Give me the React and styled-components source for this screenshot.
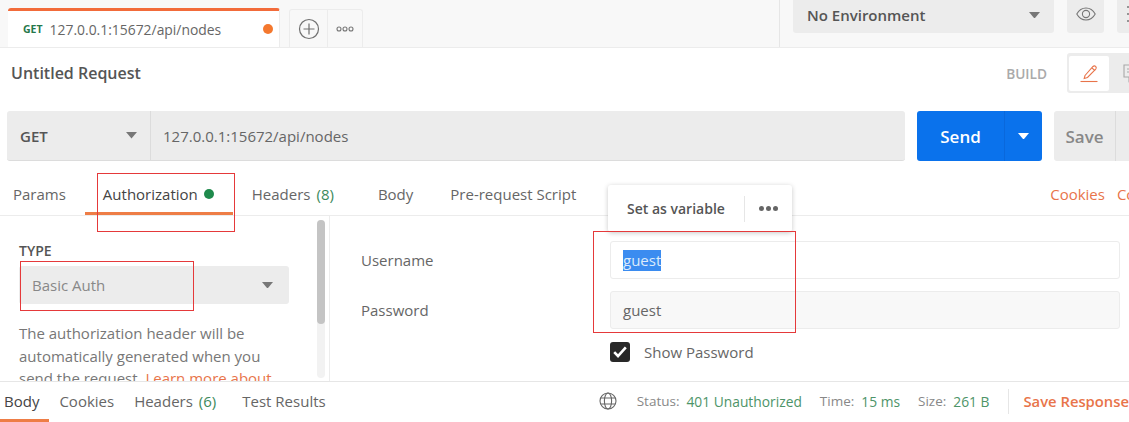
import { Fragment } from "react";
import styled, { createGlobalStyle } from "styled-components";

const GlobalStyle = createGlobalStyle`
  html, body {
    margin: 0;
    padding: 0;
    background: #fff;
  }
  * {
    box-sizing: border-box;
  }
`;

const Page = styled.div`
  position: relative;
  width: 1129px;
  height: 422px;
  overflow: hidden;
  display: flex;
  flex-direction: column;
  background: #fff;
  color: #555;
  font-family: "Open Sans", "Liberation Sans", sans-serif;
  font-size: 15px;
`;

const TopBar = styled.div`
  height: 48px;
  flex: none;
  display: flex;
  background: #f8f8f8;
  border-bottom: 1px solid #ececec;
  padding-left: 8px;
`;

const RequestTab = styled.div`
  width: 272px;
  height: 39px;
  flex: none;
  margin-top: 8px;
  padding: 0 6px 0 15px;
  display: flex;
  align-items: center;
  background: #fff;
  border-top: 3px solid #f26b3a;
  border-right: 1px solid #ececec;
  border-radius: 3px 3px 0 0;
`;

const MethodTag = styled.span`
  color: #26784a;
  font-size: 10.5px;
  font-weight: 700;
  margin-right: 7px;
`;

const TabUrl = styled.span`
  flex: 1;
  font-size: 13.9px;
  color: #666;
`;

const Dot = styled.span`
  display: inline-block;
  flex: none;
  width: ${(p) => p.$size}px;
  height: ${(p) => p.$size}px;
  border-radius: 50%;
  background: ${(p) => p.$color};
`;

const TabTools = styled.div`
  display: flex;
  flex: none;
  height: 38px;
  margin: 9px 0 0 9px;
  border: 1px solid #ececec;
  border-bottom: none;
  border-radius: 3px 3px 0 0;
`;

const ToolButton = styled.div`
  width: ${(p) => p.$width}px;
  display: flex;
  align-items: center;
  justify-content: center;
  border-left: ${(p) => (p.$divided ? "1px solid #ececec" : "none")};
`;

const EnvArea = styled.div`
  margin-left: 416px;
  padding-left: 13px;
  border-left: 1px solid #e6e6e6;
  display: flex;
  gap: 13px;
  flex: none;
`;

const EnvSelect = styled.div`
  width: 261px;
  height: 33px;
  padding: 0 14px 3px;
  display: flex;
  align-items: center;
  justify-content: space-between;
  background: #ececec;
  border-radius: 0 0 3px 3px;
  font-weight: 600;
  font-size: 15px;
  color: #555;
`;

const EnvButton = styled.div`
  width: 37px;
  height: 33px;
  flex: none;
  display: flex;
  align-items: center;
  justify-content: ${(p) => (p.$start ? "flex-start" : "center")};
  padding: 0 0 5px ${(p) => (p.$start ? "10px" : "0")};
  background: #ececec;
  border-radius: 0 0 3px 3px;
`;

const TitleRow = styled.div`
  height: 50px;
  flex: none;
  display: flex;
  align-items: center;
  justify-content: space-between;
  padding-left: 11px;
`;

const Title = styled.div`
  font-size: 16px;
  font-weight: 600;
  color: #555;
  margin-top: -1px;
`;

const ModeSwitch = styled.div`
  display: flex;
  flex: none;
  align-items: center;
  margin-right: -20px;
`;

const ModeLabel = styled.span`
  font-size: 13.7px;
  font-weight: 600;
  color: #aaa;
  margin-right: 20px;
`;

const ModeGroup = styled.div`
  width: 82px;
  height: 40px;
  flex: none;
  display: flex;
  align-items: center;
  padding: 2px;
  gap: 3px;
  background: #ececec;
  border-radius: 3px;
`;

const ModeButton = styled.div`
  width: 40px;
  height: 35px;
  flex: none;
  display: flex;
  align-items: center;
  justify-content: center;
  background: ${(p) => (p.$active ? "#fff" : "transparent")};
  border-radius: 2px;
`;

const UrlRow = styled.div`
  margin-top: 13px;
  height: 50px;
  flex: none;
  display: flex;
  padding-left: 7px;
`;

const UrlGroup = styled.div`
  width: 898px;
  flex: none;
  display: flex;
  background: #ececec;
  border-bottom: 1px solid #dcdcdc;
  border-radius: 3px;
`;

const MethodSelect = styled.div`
  width: 144px;
  padding: 0 13px;
  display: flex;
  align-items: center;
  justify-content: space-between;
  border-right: 1px solid #dcdcdc;
  font-weight: 600;
`;

const UrlInput = styled.div`
  flex: 1;
  padding-left: 12px;
  display: flex;
  align-items: center;
  color: #666;
`;

const SendButton = styled.div`
  width: 125px;
  flex: none;
  margin-left: 12px;
  display: flex;
  background: #0a72ec;
  border-radius: 3px;
  color: #fff;
  font-size: 17px;
  font-weight: 600;
`;

const SendLabel = styled.div`
  flex: 1;
  display: flex;
  align-items: center;
  justify-content: center;
`;

const SendCaret = styled.div`
  width: 38px;
  display: flex;
  align-items: center;
  justify-content: center;
  border-left: 1px solid #0968dc;
`;

const SaveButton = styled.div`
  width: 90px;
  margin-left: 12px;
  flex: none;
  display: flex;
  background: #ececec;
  border-radius: 3px;
  color: #888;
  font-size: 17px;
  font-weight: 600;
`;

const SaveLabel = styled.div`
  width: 62px;
  display: flex;
  align-items: center;
  justify-content: center;
  border-right: 1px solid #dcdcdc;
`;

const RequestTabs = styled.div`
  margin-top: 16px;
  height: 39px;
  flex: none;
  display: flex;
  align-items: stretch;
  border-bottom: 1px solid #ececec;
  padding-left: 13px;
`;

const TabItem = styled.div`
  position: relative;
  flex: none;
  display: flex;
  align-items: center;
  gap: 6px;
  padding-bottom: ${(p) => (p.$flush ? 2 : 5)}px;
  margin-left: ${(p) => p.$gap || 0}px;
  color: ${(p) => (p.$active ? "#444" : "#666")};
  white-space: nowrap;
`;

const ActiveLine = styled.span`
  position: absolute;
  left: ${(p) => p.$left}px;
  right: ${(p) => p.$right}px;
  bottom: 0;
  height: 3px;
  background: #ee7d46;
`;

const Count = styled.span`
  color: #3c8a5c;
`;

const LinkTabs = styled.div`
  margin-left: auto;
  margin-right: -24px;
  flex: none;
  display: flex;
  align-items: center;
  gap: 12px;
  padding-bottom: 5px;
  color: #e8744a;
`;

const Body = styled.div`
  height: 165px;
  flex: none;
  display: flex;
`;

const SidePanel = styled.div`
  position: relative;
  width: 330px;
  flex: none;
  overflow: hidden;
  padding: 26px 0 0 19px;
  border-right: 1px solid #ececec;
`;

const TypeLabel = styled.div`
  font-size: 14px;
  font-weight: 600;
  line-height: 17px;
  color: #555;
`;

const TypeSelect = styled.div`
  width: 270px;
  height: 38px;
  margin-top: 7px;
  padding: 0 16px 0 13px;
  display: flex;
  align-items: center;
  justify-content: space-between;
  background: #ececec;
  border-radius: 3px;
  color: #888;
`;

const HelpText = styled.p`
  width: 262px;
  margin: 18px 0 0;
  line-height: 22.5px;
  color: #777;
`;

const HelpLink = styled.span`
  color: #e8744a;
`;

const ScrollTrack = styled.div`
  position: absolute;
  top: 4px;
  right: 4px;
  width: 8px;
  height: 158px;
  background: #f2f2f2;
  border-radius: 4px;
`;

const ScrollThumb = styled.div`
  height: 104px;
  background: #c4c4c4;
  border-radius: 4px;
`;

const FormPanel = styled.div`
  flex: 1;
  padding: 25px 9px 0 31px;
  display: grid;
  grid-template-columns: 249px 1fr;
  grid-auto-rows: 38px;
  row-gap: 12px;
  align-items: center;
`;

const FieldLabel = styled.div`
  color: #666;
`;

const Field = styled.div`
  height: 38px;
  padding-left: 12px;
  display: flex;
  align-items: center;
  border: 1px solid #ececec;
  border-radius: 3px;
  background: ${(p) => (p.$filled ? "#f8f8f8" : "#fff")};
  color: #666;
`;

const Selected = styled.span`
  background: #3b8cf0;
  color: #dcebfb;
  line-height: 21px;
`;

const ShowPassword = styled.div`
  grid-column: 2;
  display: flex;
  align-items: center;
  gap: 14px;
  height: 24px;
  margin-top: -16px;
  color: #666;
`;

const CheckBox = styled.div`
  width: 20px;
  height: 20px;
  display: flex;
  align-items: center;
  justify-content: center;
  background: #282828;
  border-radius: 3px;
`;

const BottomBar = styled.div`
  flex: 1;
  display: flex;
  align-items: stretch;
  padding-left: 4px;
  border-top: 1px solid #e6e6e6;
`;

const Status = styled.div`
  margin-left: auto;
  display: flex;
  align-items: center;
  padding-bottom: 2px;
  flex: none;
  white-space: nowrap;
`;

const StatusName = styled.span`
  color: #888;
  font-size: 13.5px;
  margin: 0 7px 0 ${(p) => p.$gap}px;
`;

const StatusValue = styled.span`
  color: #4d9468;
  font-size: 13.8px;
`;

const StatusDivider = styled.span`
  width: 1px;
  height: 25px;
  margin: 0 14px 0 19px;
  background: #e6e6e6;
`;

const SaveResponse = styled.span`
  color: #e8744a;
  font-size: 14.8px;
  font-weight: 600;
`;

const RedBox = styled.div`
  position: absolute;
  left: ${(p) => p.$left}px;
  top: ${(p) => p.$top}px;
  width: ${(p) => p.$width}px;
  height: ${(p) => p.$height}px;
  border: 1px solid #e5393a;
  pointer-events: none;
`;

const Popover = styled.div`
  position: absolute;
  left: 608px;
  top: 185px;
  width: 184px;
  height: 47px;
  display: flex;
  align-items: center;
  background: #fff;
  border-radius: 3px;
  box-shadow: 0 1px 5px rgba(0, 0, 0, 0.22);
  font-size: 14px;
  font-weight: 600;
  color: #555;
`;

const PopoverLabel = styled.span`
  width: 137px;
  padding-left: 19px;
  line-height: 26px;
  border-right: 1px solid #e6e6e6;
`;

const PopoverMore = styled.span`
  flex: 1;
  display: flex;
  justify-content: center;
  gap: 2px;
`;

const Caret = ({ color = "#777", size = 11 }) => (
  <svg width={size} height={size * 0.6} viewBox="0 0 10 6">
    <path d="M0 0h10L5 6z" fill={color} />
  </svg>
);

const PlusCircle = () => (
  <svg width="22" height="22" viewBox="0 0 22 22" fill="none" stroke="#707070" strokeWidth="1.2">
    <circle cx="11" cy="11" r="9.5" />
    <path d="M11 5.5v11M5.5 11h11" />
  </svg>
);

const RingDots = () => (
  <svg width="18" height="6" viewBox="0 0 18 6" fill="none" stroke="#777" strokeWidth="1.1">
    <circle cx="3" cy="3" r="2" />
    <circle cx="9" cy="3" r="2" />
    <circle cx="15" cy="3" r="2" />
  </svg>
);

const Eye = () => (
  <svg width="20" height="14" viewBox="0 0 20 14" fill="none" stroke="#777" strokeWidth="1.1">
    <path d="M.8 7C3 3 6.2 1 10 1s7 2 9.2 6C17 11 13.8 13 10 13S3 11 .8 7z" />
    <circle cx="10" cy="7" r="3.6" />
  </svg>
);

const MenuDashes = () => (
  <svg width="6" height="16" viewBox="0 0 6 16" fill="none" stroke="#777" strokeWidth="1.6">
    <path d="M0 1h6M0 8h6M0 15h6" />
  </svg>
);

const Pencil = () => (
  <svg width="20" height="20" viewBox="0 0 20 20" fill="none" stroke="#e8744a" strokeWidth="1.1">
    <path d="M6 12.5 14 3.5c.8-.8 2-.8 2.7 0 .7.7.7 1.8 0 2.6L8.5 14.5l-3.3 1z" />
    <path d="M13 5l3 2.6" />
    <path d="M1.5 18.5h17" />
  </svg>
);

const Comment = () => (
  <svg width="20" height="20" viewBox="0 0 20 20" fill="none" stroke="#a8a8a8" strokeWidth="1.1">
    <path d="M2 2h14v12h-6l-3 4v-4H2z" />
    <path d="M5 6h8M5 9h8" />
  </svg>
);

const Globe = () => (
  <svg width="18" height="18" viewBox="0 0 18 18" fill="none" stroke="#666" strokeWidth="1.1">
    <circle cx="9" cy="9" r="8" />
    <ellipse cx="9" cy="9" rx="3.6" ry="8" />
    <path d="M1.8 6h14.4M1.8 12h14.4" />
  </svg>
);

const Check = () => (
  <svg width="14" height="12" viewBox="0 0 14 12" fill="none" stroke="#fff" strokeWidth="2.6">
    <path d="M1.2 6.2 5 10l7.8-8.6" />
  </svg>
);

const statusItems = [
  { name: "Status:", value: "401 Unauthorized", gap: 20 },
  { name: "Time:", value: "15 ms", gap: 18 },
  { name: "Size:", value: "261 B", gap: 18 },
];

export default function App() {
  return (
    <Page>
      <GlobalStyle />
      <TopBar>
        <RequestTab>
          <MethodTag>GET</MethodTag>
          <TabUrl>127.0.0.1:15672/api/nodes</TabUrl>
          <Dot $size={10} $color="#f4782e" />
        </RequestTab>
        <TabTools>
          <ToolButton $width={37}>
            <PlusCircle />
          </ToolButton>
          <ToolButton $width={35} $divided>
            <RingDots />
          </ToolButton>
        </TabTools>
        <EnvArea>
          <EnvSelect>
            No Environment
            <Caret />
          </EnvSelect>
          <EnvButton>
            <Eye />
          </EnvButton>
          <EnvButton $start>
            <MenuDashes />
          </EnvButton>
        </EnvArea>
      </TopBar>

      <TitleRow>
        <Title>Untitled Request</Title>
        <ModeSwitch>
          <ModeLabel>BUILD</ModeLabel>
          <ModeGroup>
            <ModeButton $active>
              <Pencil />
            </ModeButton>
            <ModeButton>
              <Comment />
            </ModeButton>
          </ModeGroup>
        </ModeSwitch>
      </TitleRow>

      <UrlRow>
        <UrlGroup>
          <MethodSelect>
            GET
            <Caret />
          </MethodSelect>
          <UrlInput>127.0.0.1:15672/api/nodes</UrlInput>
        </UrlGroup>
        <SendButton>
          <SendLabel>Send</SendLabel>
          <SendCaret>
            <Caret color="#fff" />
          </SendCaret>
        </SendButton>
        <SaveButton>
          <SaveLabel>Save</SaveLabel>
        </SaveButton>
      </UrlRow>

      <RequestTabs>
        <TabItem>Params</TabItem>
        <TabItem $gap={37} $active>
          Authorization
          <Dot $size={10} $color="#1f8a4c" />
          <ActiveLine $left={-18} $right={-19} />
        </TabItem>
        <TabItem $gap={38}>
          Headers <Count>(8)</Count>
        </TabItem>
        <TabItem $gap={44}>Body</TabItem>
        <TabItem $gap={37}>Pre-request Script</TabItem>
        <LinkTabs>
          <span>Cookies</span>
          <span>Code</span>
        </LinkTabs>
      </RequestTabs>

      <Body>
        <SidePanel>
          <TypeLabel>TYPE</TypeLabel>
          <TypeSelect>
            Basic Auth
            <Caret />
          </TypeSelect>
          <HelpText>
            The authorization header will be automatically generated when you send the request.{" "}
            <HelpLink>Learn more about</HelpLink>
          </HelpText>
          <ScrollTrack>
            <ScrollThumb />
          </ScrollTrack>
        </SidePanel>
        <FormPanel>
          <FieldLabel>Username</FieldLabel>
          <Field>
            <Selected>guest</Selected>
          </Field>
          <FieldLabel>Password</FieldLabel>
          <Field $filled>guest</Field>
          <ShowPassword>
            <CheckBox>
              <Check />
            </CheckBox>
            Show Password
          </ShowPassword>
        </FormPanel>
      </Body>

      <BottomBar>
        <TabItem $active $flush>
          Body
          <ActiveLine $left={-4} $right={-10} />
        </TabItem>
        <TabItem $gap={20} $flush>Cookies</TabItem>
        <TabItem $gap={20} $flush>
          Headers <Count>(6)</Count>
        </TabItem>
        <TabItem $gap={26} $flush>Test Results</TabItem>
        <Status>
          <Globe />
          {statusItems.map((item) => (
            <Fragment key={item.name}>
              <StatusName $gap={item.gap}>{item.name}</StatusName>
              <StatusValue>{item.value}</StatusValue>
            </Fragment>
          ))}
          <StatusDivider />
          <SaveResponse>Save Response</SaveResponse>
        </Status>
      </BottomBar>

      <RedBox $left={97} $top={173} $width={138} $height={59} />
      <RedBox $left={20} $top={261} $width={174} $height={50} />
      <Popover>
        <PopoverLabel>Set as variable</PopoverLabel>
        <PopoverMore>
          <Dot $size={5} $color="#666" />
          <Dot $size={5} $color="#666" />
          <Dot $size={5} $color="#666" />
        </PopoverMore>
      </Popover>
      <RedBox $left={593} $top={231} $width={203} $height={102} />
    </Page>
  );
}
